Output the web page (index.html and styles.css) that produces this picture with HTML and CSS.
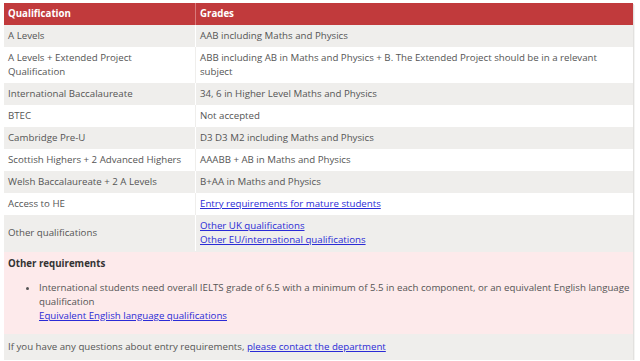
FILE: index.html
```html
<!DOCTYPE html>
<html>
<head>
<meta charset="utf-8">
<link rel="stylesheet" href="styles.css">
</head>
<body>
<div class="panel">
  <table class="grades">
    <thead>
      <tr><th class="c1">Qualification</th><th>Grades</th></tr>
    </thead>
    <tbody>
      <tr class="g"><td class="c1">A Levels</td><td>AAB including Maths and Physics</td></tr>
      <tr class="w"><td class="c1">A Levels + Extended Project Qualification</td><td>ABB including AB in Maths and Physics + B. The Extended Project should be in a relevant subject</td></tr>
      <tr class="g"><td class="c1">International Baccalaureate</td><td>34, 6 in Higher Level Maths and Physics</td></tr>
      <tr class="w"><td class="c1">BTEC</td><td>Not accepted</td></tr>
      <tr class="g"><td class="c1">Cambridge Pre-U</td><td>D3 D3 M2 including Maths and Physics</td></tr>
      <tr class="w"><td class="c1">Scottish Highers + 2 Advanced Highers</td><td>AAABB + AB in Maths and Physics</td></tr>
      <tr class="g"><td class="c1">Welsh Baccalaureate + 2 A Levels</td><td>B+AA in Maths and Physics</td></tr>
      <tr class="w"><td class="c1">Access to HE</td><td><a href="#">Entry requirements for mature students</a></td></tr>
      <tr class="g"><td class="c1">Other qualifications</td><td><a href="#">Other UK qualifications</a><br><a href="#">Other EU/international qualifications</a></td></tr>
    </tbody>
  </table>
  <div class="other">
    <h4>Other requirements</h4>
    <ul>
      <li>International students need overall IELTS grade of 6.5 with a minimum of 5.5 in each component, or an equivalent English language qualification<br><a href="#">Equivalent English language qualifications</a></li>
    </ul>
  </div>
  <p class="foot">If you have any questions about entry requirements, <a href="#">please contact the department</a></p>
</div>
</body>
</html>
```
FILE: styles.css
```css
html, body {
  margin: 0;
  padding: 0;
  background: #ffffff;
}
body {
  font-family: "Open Sans", "Liberation Sans", sans-serif;
  font-size: 9.7px;
  line-height: 14px;
  color: #555555;
  padding: 3px 4px 0 4px;
}
.panel {
  width: 629px;
  background: #efeeec;
  box-shadow: 1px 1px 0 #e2e1df, 2px 2px 0 #f4f4f3;
}
.grades {
  width: 100%;
  border-collapse: collapse;
}
.grades th {
  background: #c13a3c;
  color: #ffffff;
  font-weight: 700;
  text-align: left;
  padding: 4px 4px;
  height: 14px;
}
.grades th.c1 {
  border-right: 1px solid #d87a7b;
}
.grades td {
  padding: 4px 4px;
  height: 14px;
  vertical-align: middle;
}
.grades td.c1 {
  width: 183px;
  border-right: 1px solid #ffffff;
}
.grades tr.g td { background: #efeeec; }
.grades tr.w td { background: #ffffff; }
.grades tr.w td.c1 { border-right-color: #efeeec; }
a {
  color: #2b2bd6;
  text-decoration: underline;
}
.other {
  background: #fdeaeb;
  margin-top: 1px;
  padding: 5px 0 11px 4px;
}
.other h4 {
  margin: 0 0 10px 0;
  font-size: 9.7px;
  font-weight: 700;
  color: #333333;
  line-height: 14px;
}
.other ul {
  margin: 0 -6px 0 0;
  padding: 0 0 0 31px;
}
.foot {
  margin: 0;
  padding: 6px 4px 6px 4px;
}
```
